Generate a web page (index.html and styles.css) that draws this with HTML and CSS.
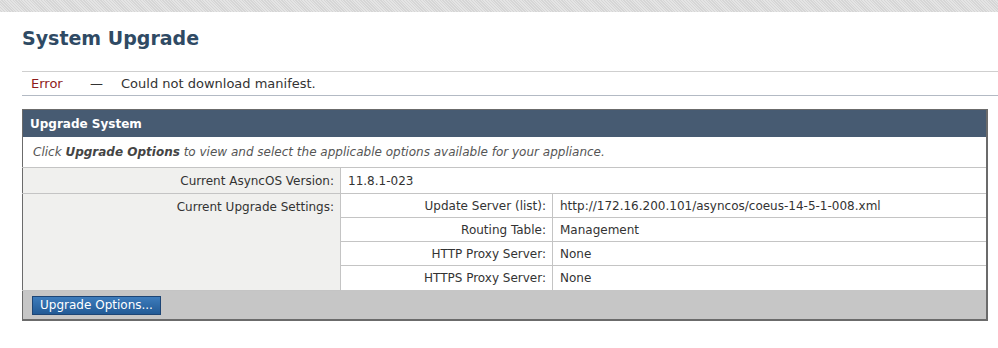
FILE: index.html
```html
<!DOCTYPE html>
<html lang="en">
<head>
<meta charset="UTF-8">
<title>System Upgrade</title>
<link rel="stylesheet" href="styles.css">
</head>
<body>

<div class="topband"></div>

<div class="page">
    <h1>System Upgrade</h1>

    <div class="notice">
        <span class="notice-type">Error</span>
        <span class="notice-dash">&mdash;</span>
        <span class="notice-text">Could not download manifest.</span>
    </div>

    <table class="panel">
        <tr>
            <th class="panel-head" colspan="2">Upgrade System</th>
        </tr>
        <tr>
            <td class="panel-desc" colspan="2">Click <b>Upgrade Options</b> to view and select the applicable options available for your appliance.</td>
        </tr>
        <tr>
            <td class="label">Current AsyncOS Version:</td>
            <td class="value">11.8.1-023</td>
        </tr>
        <tr>
            <td class="label">Current Upgrade Settings:</td>
            <td class="nested-cell">
                <table class="settings">
                    <tr>
                        <td class="settings-label">Update Server (list):</td>
                        <td class="settings-value">http://172.16.200.101/asyncos/coeus-14-5-1-008.xml</td>
                    </tr>
                    <tr>
                        <td class="settings-label">Routing Table:</td>
                        <td class="settings-value">Management</td>
                    </tr>
                    <tr>
                        <td class="settings-label">HTTP Proxy Server:</td>
                        <td class="settings-value">None</td>
                    </tr>
                    <tr>
                        <td class="settings-label">HTTPS Proxy Server:</td>
                        <td class="settings-value">None</td>
                    </tr>
                </table>
            </td>
        </tr>
        <tr>
            <td class="panel-foot" colspan="2"><button class="btn">Upgrade Options...</button></td>
        </tr>
    </table>
</div>

</body>
</html>
```

FILE: styles.css
```css
body {
    margin: 0;
    padding: 0;
    background-color: #fff;
    font-family: "DejaVu Sans", Verdana, sans-serif;
    font-size: 12px;
    color: #333;
}
.topband {
    height: 12px;
    background-color: #dcdcdc;
    background-image: repeating-linear-gradient(45deg, #e4e4e4 0 1px, #d6d6d6 1px 2px);
}
.page {
    padding-left: 22px;
}
h1 {
    margin: 13px 0 0 0;
    height: 46px;
    line-height: 26px;
    font-size: 19px;
    font-weight: bold;
    color: #2f4a64;
}
.notice {
    display: flex;
    align-items: center;
    height: 23px;
    border-top: 1px solid #cfcfcf;
    border-bottom: 1px solid #b3bac4;
    padding-left: 9px;
    font-size: 13px;
}
.notice-type {
    color: #8e1b1b;
    width: 59px;
}
.notice-dash {
    width: 31px;
}
.panel {
    margin-top: 13px;
    width: 966px;
    border-collapse: collapse;
    border-left: 1px solid #6b6b6b;
    border-right: 2px solid #6b6b6b;
    border-bottom: 2px solid #6b6b6b;
    border-top: 1px solid #6b6b6b;
}
.panel td, .panel th {
    padding: 0;
}
.panel-head {
    background-color: #475b72;
    color: #fff;
    text-align: left;
    font-weight: bold;
    height: 27px;
    padding-left: 7px !important;
}
.panel-desc {
    height: 30px;
    padding-left: 10px !important;
    font-style: italic;
    color: #555;
    border-bottom: 1px solid #c4c4c4;
}
.panel-desc b {
    color: #444;
}
.label {
    width: 311px;
    background-color: #f0f0ee;
    text-align: right;
    vertical-align: top;
    padding: 6px 6px 0 0 !important;
    height: 19px;
    border-right: 1px solid #c4c4c4;
    border-bottom: 1px solid #c4c4c4;
}
.value {
    padding-left: 7px !important;
    border-bottom: 1px solid #c4c4c4;
}
.nested-cell {
    vertical-align: top;
    background-color: #fff;
}
.settings {
    width: 100%;
    border-collapse: collapse;
}
.settings td {
    height: 23px;
    border-bottom: 1px solid #c4c4c4;
}
.settings tr:last-child td {
    border-bottom: none;
    height: 24px;
}
.settings-label {
    width: 205px;
    text-align: right;
    padding-right: 6px !important;
    border-right: 1px solid #c4c4c4;
}
.settings-value {
    padding-left: 7px !important;
}
.panel-foot {
    background-color: #c6c6c6;
    height: 28px;
    padding-left: 9px !important;
}
.btn {
    font-family: "DejaVu Sans", Verdana, sans-serif;
    font-size: 12px;
    color: #fff;
    background: linear-gradient(#3d7cbc, #225a95);
    border: 1px solid #1d4575;
    height: 19px;
    width: 129px;
    padding: 0;
    margin-top: 1px;
    cursor: pointer;
}
```
